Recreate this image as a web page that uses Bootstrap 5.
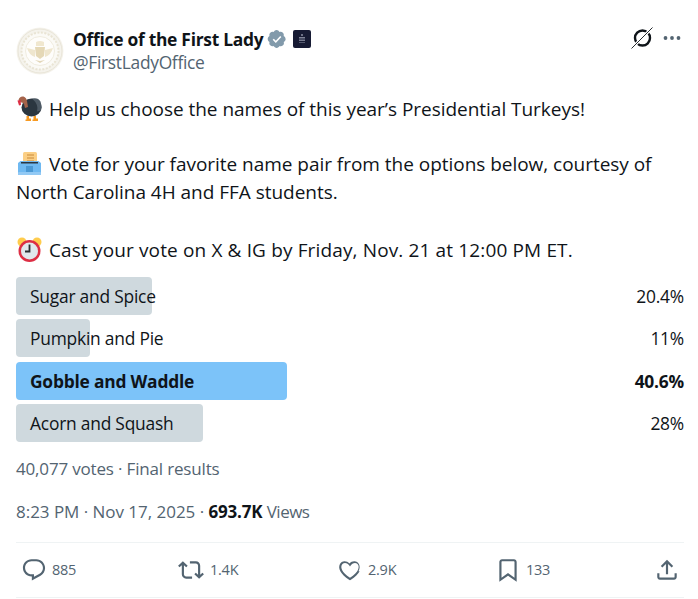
<!DOCTYPE html>
<html><head><meta charset="utf-8">
<link href="https://cdn.jsdelivr.net/npm/bootstrap@5.3.0/dist/css/bootstrap.min.css" rel="stylesheet">
<style>
html,body{background:#fff;margin:0;overflow:hidden}
body{font-family:"Open Sans","Noto Sans",sans-serif;color:#0f1419;height:599px}
.tw{padding:27px 14px 0 16px}
.av{width:48px;height:48px;flex:none}
.who{margin-left:9px}
.nm{font-size:17.4px;font-weight:700;line-height:24px;letter-spacing:-.27px}
.hd{font-size:17.4px;color:#536471;line-height:23px;letter-spacing:-.3px}
.vb{margin-left:4px}
.wh{margin-left:6px}
.tools{gap:8px;margin-right:2px;margin-top:-1px}
.tx{font-size:19px;line-height:28.5px;letter-spacing:-.03px;margin-top:20px;white-space:nowrap}
.tx svg{vertical-align:-6px;margin-right:6px}
.brk{margin-top:26px}
.brk2{margin-top:29px;letter-spacing:.14px}
.tp{margin-top:13px;display:flex;flex-direction:column;gap:4.4px}
.pr{display:flex;justify-content:space-between;align-items:center;height:38px;font-size:17.4px;letter-spacing:-.22px;position:relative}
.br{position:absolute;left:0;top:0;bottom:0;background:#cfd9de;border-radius:4px}
.br.on{background:#7cc3f9}
.lb{position:relative;padding-left:14px}
.pr.w{font-weight:700}
.vt{font-size:17px;color:#536471;line-height:24px;letter-spacing:-.17px;margin-top:15px}
.ti{font-size:17px;color:#536471;line-height:24px;letter-spacing:-.03px;margin-top:19px}
.ti b{color:#0f1419;letter-spacing:-.2px}
.vw{letter-spacing:-.5px}
.ac{border-top:1px solid #eff3f4;border-bottom:1px solid #eff3f4;height:56px;margin-top:18px;color:#536471;font-size:14.5px;letter-spacing:-.25px;padding-left:5px;display:grid;grid-template-columns:157px 159px 158px 159px 26px;align-items:center}
.ac svg{width:26px;height:26px;fill:currentColor;flex:none}
.ai{display:flex;align-items:center;gap:5px}
.ai2{gap:6px}
</style></head><body>
<div class="tw">
<div class="d-flex">
<svg class="av" viewBox="0 0 48 48"><circle cx="24" cy="24" r="23.500" fill="#f5f3ec"/><circle cx="24" cy="24" r="22" fill="none" stroke="#e9e5d8"/><circle cx="24" cy="24" r="18.500" fill="#fbfaf6" stroke="#e9e4d4" stroke-width="2" stroke-dasharray="2 1.500"/><circle cx="24" cy="24" r="14.500" fill="#fefdfb" stroke="#f0ecdf"/><path d="M20 15q4-2 8 0v4h-8z" fill="#f0e7cf"/><path d="M19 20h10l-1 9-4 3-4-3z" fill="#e5d8b6"/><path d="M11 21l8 2v7q-6-2-8-9zM37 21l-8 2v7q6-2 8-9z" fill="#efe6ce"/><path d="M19 33l5 3 5-3-5 1z" fill="#e2d6b8"/></svg>
<div class="who flex-grow-1">
<div class="d-flex align-items-center nm"><span>Office of the First Lady</span>
<svg class="vb" width="20" height="20" viewBox="0 0 22 22"><path fill="#829aab" d="M20.400 11c0-1.400-.8-2.600-2.100-3.200.5-1.300.2-2.800-.8-3.800s-2.500-1.300-3.800-.8C13.100 2 11.900 1.100 10.500 1.100S8 2 7.400 3.200C6.100 2.700 4.600 3 3.600 4s-1.300 2.500-.8 3.800C1.600 8.400.8 9.600.8 11s.8 2.600 2 3.200c-.5 1.300-.2 2.800.8 3.800s2.500 1.300 3.800.8c.6 1.200 1.800 2.100 3.200 2.100s2.600-.9 3.200-2.100c1.300.5 2.800.2 3.800-.8s1.300-2.500.8-3.800c1.300-.6 2.100-1.800 2.100-3.200z"/><path fill="#fff" d="M9.700 15.400l-3.500-3.500 1.300-1.300 2.200 2.200 4.800-5.200 1.300 1.200z"/></svg>
<svg class="wh" width="18" height="18" viewBox="0 0 18 18"><rect width="18" height="18" rx="2" fill="#171b34"/><rect x="8" y="4" width="2" height="2" fill="#6d7186"/><rect x="6" y="7" width="6" height="1.500" fill="#7f8397"/><rect x="6" y="9.500" width="6" height="1.500" fill="#787c90"/><rect x="6" y="12" width="6" height="1" fill="#555a70"/></svg>
</div>
<div class="hd">@FirstLadyOffice</div>
</div>
<div class="d-flex align-items-start tools">
<svg width="24" height="24" viewBox="0 0 24 24"><circle cx="12.500" cy="12" r="7.500" fill="none" stroke="#0f1419" stroke-width="2.400"/><path d="M22.500 1.500L1.500 22.500" stroke="#fff" stroke-width="3"/><path d="M22.500 1.500L1.500 22.500" stroke="#0f1419" stroke-width=".9"/></svg>
<svg width="20" height="24" viewBox="0 0 20 24" fill="#536471"><circle cx="3.500" cy="12" r="1.900"/><circle cx="10" cy="12" r="1.900"/><circle cx="16.500" cy="12" r="1.900"/></svg>
</div>
</div>
<div class="tx">
<div><svg width="27" height="27" viewBox="0 0 27 27"><ellipse cx="15.500" cy="12.500" rx="10" ry="9" fill="#2b3640"/><path d="M16 3.500q6-1.500 8.500 3 2 4.500.5 9l-4 1q2-7-5-13z" fill="#4d5964"/><path d="M2.500 5q1-4 5-3.500 3 1 3.500 4.500l1 6-3 1-1-4q-1-2-3-1.500z" fill="#a5634a"/><path d="M1.500 5.500l3-.5.5 5-2 .5z" fill="#dd2e44"/><path d="M10.500 21h2.500v2.500h2V26h-5.500v-1.500h1zM17.500 21H20v2.500h2V26h-5.500v-1.500h1z" fill="#f79a22"/></svg>Help us choose the names of this year’s Presidential Turkeys!</div>
<div class="brk"><svg width="27" height="27" viewBox="0 0 27 27"><rect x="7" y="2" width="14" height="13" rx="1.500" fill="#fbcf85"/><path d="M11 5h7M11 8h7M11 11h7" stroke="#c98a3a"/><path d="M4.500 11h18l2.500 2v11a1 1 0 0 1-1 1H3a1 1 0 0 1-1-1V13z" fill="#6fb9f1"/><rect x="5" y="12" width="17" height="1.500" fill="#2b3640"/><rect x="2" y="22" width="23" height="3" rx="1" fill="#92c9f4"/><rect x="10" y="16" width="7" height="6" fill="#4a98d3"/></svg>Vote for your favorite name pair from the options below, courtesy of</div>
<div>North Carolina 4H and FFA students.</div>
<div class="brk2"><svg width="27" height="27" viewBox="0 0 27 27"><circle cx="6" cy="6" r="4.500" fill="#ffcc4d"/><circle cx="21" cy="6" r="4.500" fill="#ffcc4d"/><circle cx="13.500" cy="15" r="11" fill="#dd2e44"/><circle cx="13.500" cy="15" r="8.500" fill="#e1e8ed"/><path d="M13.500 8.500v7H9" stroke="#292f33" stroke-width="1.800" fill="none"/></svg>Cast your vote on X &amp; IG by Friday, Nov. 21 at 12:00 PM ET.</div>
</div>
<div class="tp">
<div class="pr"><div class="br" style="width:136px"></div><span class="lb">Sugar and Spice</span><span>20.4%</span></div>
<div class="pr"><div class="br" style="width:74px"></div><span class="lb">Pumpkin and Pie</span><span>11%</span></div>
<div class="pr w"><div class="br on" style="width:271px"></div><span class="lb">Gobble and Waddle</span><span>40.6%</span></div>
<div class="pr"><div class="br" style="width:187px"></div><span class="lb">Acorn and Squash</span><span>28%</span></div>
</div>
<div class="vt">40,077 votes · Final results</div>
<div class="ti">8:23 PM · Nov 17, 2025 · <b>693.7K</b> <span class="vw">Views</span></div>
<div class="ac">
<div class="ai"><svg viewBox="0 0 24 24"><path d="M1.751 10c0-4.420 3.584-8 8.005-8h4.366c4.490 0 8.129 3.640 8.129 8.130 0 2.960-1.607 5.680-4.196 7.110l-8.054 4.460v-3.690h-.067c-4.490.1-8.183-3.510-8.183-8.010zm8.005-6c-3.317 0-6.005 2.690-6.005 6 0 3.370 2.770 6.080 6.138 6.010l.351-.01h1.761v2.300l5.087-2.810c1.951-1.080 3.163-3.130 3.163-5.360 0-3.390-2.744-6.130-6.129-6.130H9.756z"/></svg><span>885</span></div>
<div class="ai ai2"><svg viewBox="0 0 24 24"><path d="M4.500 3.880l4.432 4.140-1.364 1.460L5.500 7.550V16c0 1.100.896 2 2 2H13v2H7.500c-2.209 0-4-1.790-4-4V7.550L1.432 9.480.068 8.020 4.500 3.880zM16.500 6H11V4h5.500c2.209 0 4 1.790 4 4v8.450l2.068-1.930 1.364 1.460-4.432 4.140-4.432-4.140 1.364-1.460 2.068 1.930V8c0-1.100-.896-2-2-2z"/></svg><span>1.4K</span></div>
<div class="ai"><svg viewBox="0 0 24 24"><path d="M16.697 5.500c-1.222-.06-2.679.51-3.890 2.160l-.805 1.090-.806-1.090C9.984 6.010 8.526 5.440 7.304 5.500c-1.243.07-2.349.78-2.900 1.850-.539 1.050-.660 2.730.4 4.770 1.080 2.020 3.200 4.430 7.196 6.990 3.996-2.560 6.120-4.970 7.196-6.990 1.060-2.040.939-3.720.4-4.770-.551-1.070-1.657-1.780-2.900-1.850zm4.187 7.690c-1.351 2.480-3.910 5.180-8.380 7.950l-.504.310-.525-.31c-4.470-2.770-7.029-5.470-8.380-7.950-1.360-2.560-1.310-4.900-.470-6.550.829-1.620 2.440-2.640 4.220-2.640 1.670-.07 3.370.59 4.620 2.010 1.250-1.420 2.950-2.080 4.620-2.010 1.780 0 3.391 1.020 4.220 2.640.84 1.650.890 3.990-.420 6.550z"/></svg><span>2.9K</span></div>
<div class="ai"><svg viewBox="0 0 24 24"><path d="M4 4.500C4 3.120 5.119 2 6.500 2h11C18.881 2 20 3.120 20 4.500v18.440l-8-5.710-8 5.710V4.500zM6.500 4c-.276 0-.5.220-.5.500v14.560l6-4.290 6 4.290V4.500c0-.280-.224-.5-.5-.5h-11z"/></svg><span>133</span></div>
<svg viewBox="0 0 24 24"><path d="M12 2.590l5.700 5.700-1.410 1.420L13 6.410V16h-2V6.410l-3.300 3.300-1.410-1.420L12 2.590zM21 15l-.02 3.510c0 1.380-1.120 2.490-2.500 2.490H5.500C4.110 21 3 19.880 3 18.500V15h2v3.500c0 .280.220.5.500.5h12.980c.280 0 .5-.220.500-.5L19 15h2z"/></svg>
</div>
</div>
</body></html>
